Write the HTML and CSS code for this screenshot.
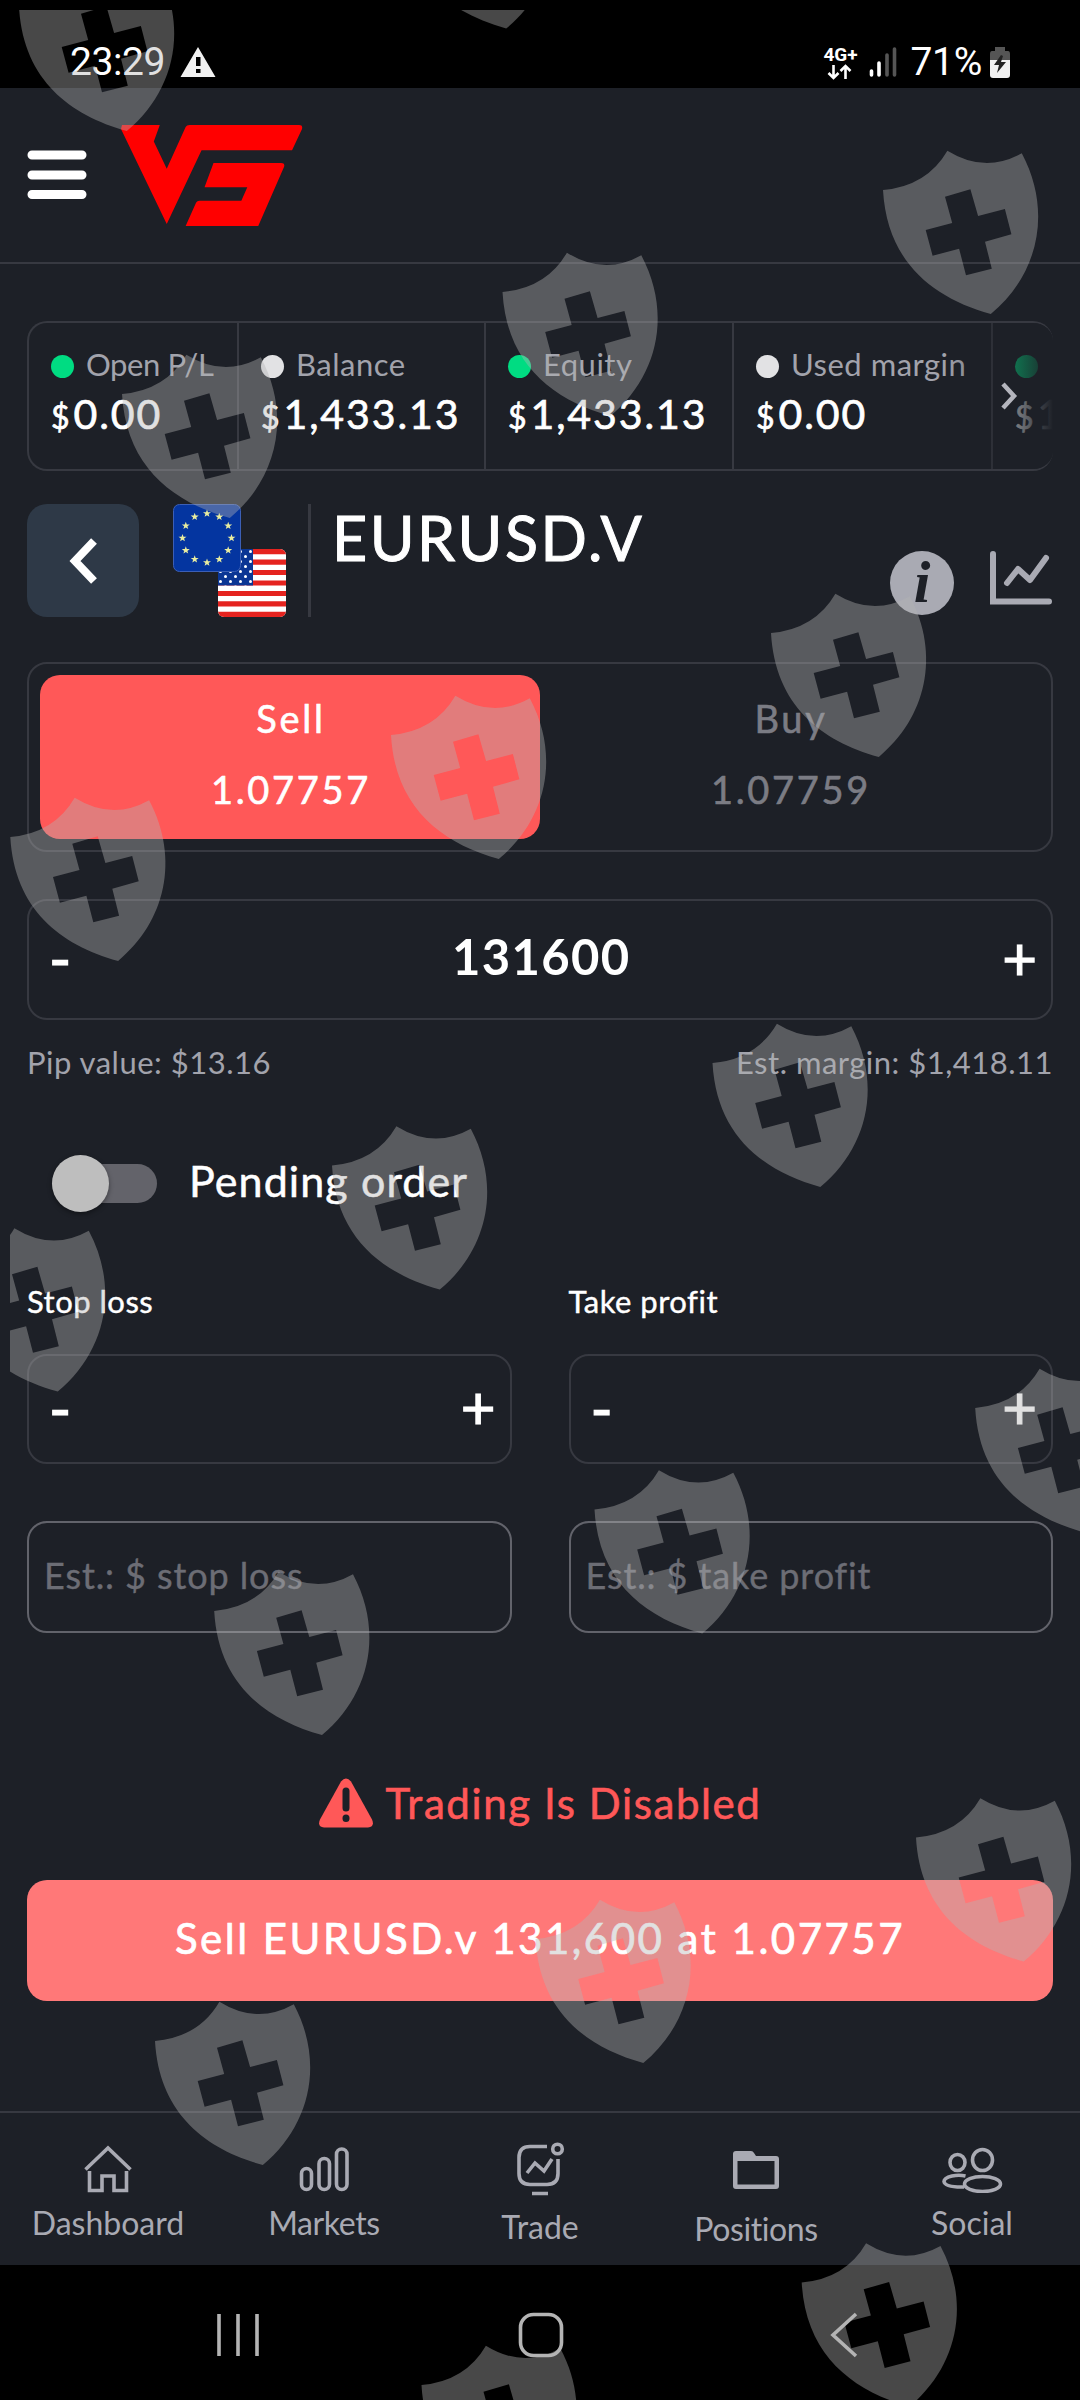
FILE: index.html
```
<!DOCTYPE html>
<html lang="en">
<head>
  <meta charset="UTF-8" />
  <meta name="viewport" content="width=device-width, initial-scale=1.0"/>
  <title>EURUSD.V</title>
  <link rel="stylesheet" href="styles.css">
</head>
<body>
<div class="phone">

  <div class="statusbar">
    <span class="clock">23:29</span>
    <svg class="alert" width="36" height="32" viewBox="0 0 36 32"><path fill="#f1f1f1" fill-rule="evenodd" d="M18 1L35.500 31H.5zM16 11v9h4.500v-9zM16 23v4h4.500v-4z"/></svg>
    <div class="network">
      <span>4G+</span>
      <svg width="26" height="16" viewBox="0 0 26 16" fill="none" stroke="#fff" stroke-width="2.600"><path d="M6.500 1v13M1.500 9l5 5 5-5M18.500 15V2M13.500 7l5-5 5 5"/></svg>
    </div>
    <svg class="signal" width="28" height="32" viewBox="0 0 28 32" stroke-width="3.600" stroke-linecap="round"><path stroke="#fff" d="M2.500 25v4M10 17v12"/><path stroke="#555" d="M18 9v20M25.500 3v26"/></svg>
    <span class="percent">71%</span>
    <svg class="battery" width="22" height="33" viewBox="0 0 22 33"><path fill="#555" d="M6 1h10v4h3q2 0 2 3v8H1V8q0-3 2-3h3z"/><path fill="#f1f1f1" d="M1 14h20v15q0 3-3 3H4q-3 0-3-3z"/><path fill="#222" d="M12 9L5 19h5l-2 8 9-11h-5l2-6z"/></svg>
  </div>

  <header class="header">
    <svg class="menu" width="60" height="50" viewBox="0 0 60 50" stroke="#fff" stroke-width="9" stroke-linecap="round"><path d="M5 5h50M5 25h50M5 44.500h50"/></svg>
    <svg class="logo" width="183" height="101" viewBox="0 0 184 104" preserveAspectRatio="none" fill="#f00"><path d="M2 0h38l-6 17 13 28L66 2q1-2 4-2h110q4 0 3 4l-10 22H82L47 102 1 4zM94 39h68q4 0 3 4l-26 61H66l10-23q1-3 4-3h42l6-14H85l8-22z"/></svg>
  </header>

  <main class="main">
    <section class="stats">
      <div class="stat stat-pl">
        <div class="stat-label"><i class="dot green"></i>Open P/L</div>
        <div class="stat-value"><small>$</small>0.00</div>
      </div>
      <div class="stat stat-balance">
        <div class="stat-label"><i class="dot"></i>Balance</div>
        <div class="stat-value"><small>$</small>1,433.13</div>
      </div>
      <div class="stat stat-equity">
        <div class="stat-label"><i class="dot green"></i>Equity</div>
        <div class="stat-value"><small>$</small>1,433.13</div>
      </div>
      <div class="stat stat-margin">
        <div class="stat-label"><i class="dot"></i>Used margin</div>
        <div class="stat-value"><small>$</small>0.00</div>
      </div>
      <div class="stat stat-last">
        <div class="stat-label"><i class="dot green"></i></div>
        <div class="stat-value"><small>$</small>1</div>
      </div>
      <div class="stats-fade">
        <svg width="20" height="30" viewBox="0 0 20 30" fill="none" stroke="#b4b5bd" stroke-width="4.500"><path d="M3 3l11 12L3 27"/></svg>
      </div>
    </section>

    <section class="symbol">
      <button class="back">
        <svg width="32" height="50" viewBox="0 0 32 50" fill="none" stroke="#fff" stroke-width="8"><path d="M27 5L8 25l19 20"/></svg>
      </button>
      <svg class="flags" width="113" height="113" viewBox="0 0 113 113">
        <defs>
          <clipPath id="us"><rect x="45" y="45" width="68" height="68" rx="6"/></clipPath>
          <pattern id="stars" width="10" height="10" patternUnits="userSpaceOnUse"><circle cx="2.500" cy="2.500" r="1.500" fill="#fff"/><circle cx="7.500" cy="7.500" r="1.500" fill="#fff"/></pattern>
          <path id="star" fill="#e9eda0" d="M0-4L1-1.300 4-1.200 1.600.6 2.400 3.300 0 1.700-2.400 3.300-1.600.6-4-1.200-1-1.300z"/>
        </defs>
        <g clip-path="url(#us)">
          <path fill="#fff" d="M45 45h68v68H45z"/>
          <path stroke="#e5231f" stroke-width="5.230" d="M45 47.600h68M45 58.100h68M45 68.500h68M45 79h68M45 89.500h68M45 99.900h68M45 110.400h68"/>
          <path fill="#0b3694" d="M45 45h35v36.600H45z"/>
          <path fill="url(#stars)" d="M45 45h35v36.600H45z"/>
        </g>
        <rect x=".5" y=".5" width="67" height="67" rx="6" fill="#0435a0" stroke="#3c5fb5"/>
        <use href="#star" x="34" y="9.500"/><use href="#star" x="46.300" y="12.800"/><use href="#star" x="55.200" y="21.700"/>
        <use href="#star" x="58.500" y="34"/><use href="#star" x="55.200" y="46.300"/><use href="#star" x="46.300" y="55.200"/>
        <use href="#star" x="34" y="58.500"/><use href="#star" x="21.700" y="55.200"/><use href="#star" x="12.800" y="46.300"/>
        <use href="#star" x="9.500" y="34"/><use href="#star" x="12.800" y="21.700"/><use href="#star" x="21.700" y="12.800"/>
      </svg>
      <h1>EURUSD.V</h1>
      <div class="symbol-icons">
        <div class="info">i</div>
        <svg width="62" height="54" viewBox="0 0 62 54" fill="none" stroke="#a9aab3" stroke-width="6" stroke-linecap="round" stroke-linejoin="round"><path stroke-linejoin="miter" d="M3 3v47.500h56"/><path d="M17 32l11-14 12 11L56 7"/></svg>
      </div>
    </section>

    <section class="sides">
      <button class="side active"><span>Sell</span><span>1.07757</span></button>
      <button class="side"><span>Buy</span><span>1.07759</span></button>
    </section>

    <div class="stepper amount"><span class="minus">-</span><b>131600</b><span class="plus">+</span></div>
    <div class="hints"><span>Pip value: $13.16</span><span>Est. margin: $1,418.11</span></div>

    <div class="pending"><span class="toggle"></span><span class="pending-text">Pending order</span></div>

    <div class="limits">
      <div class="limit">
        <label>Stop loss</label>
        <div class="stepper"><span class="minus">-</span><span class="plus">+</span></div>
        <div class="field">Est.: $ stop loss</div>
      </div>
      <div class="limit">
        <label>Take profit</label>
        <div class="stepper"><span class="minus">-</span><span class="plus">+</span></div>
        <div class="field">Est.: $ take profit</div>
      </div>
    </div>

    <div class="disabled">
      <svg width="54" height="50" viewBox="0 0 54 50"><path fill="#ff5858" d="M22 3.500q5-6 10 0l21 38q3 7-4 8H5q-7-1-4-8z"/><path fill="none" stroke="#1d2027" stroke-width="7" stroke-linecap="round" d="M27 13v17M27 40v.5"/></svg>
      <span>Trading Is Disabled</span>
    </div>
    <button class="submit">Sell EURUSD.v 131,600 at 1.07757</button>
  </main>

  <nav class="tabs">
    <a class="tab">
      <svg width="50" height="48" viewBox="0 0 50 48"><path d="M2.500 24.500L25 3l22.500 21.500M6.500 26v19.500H19V31h12v14.500h12.500V26"/></svg>
      <span>Dashboard</span>
    </a>
    <a class="tab tab-markets">
      <svg width="50" height="48" viewBox="0 0 50 48"><rect x="2.500" y="23.500" width="10" height="21" rx="5"/><rect x="20" y="13.500" width="10.500" height="31" rx="5.200"/><rect x="37.500" y="4" width="10.500" height="40.500" rx="5.200"/></svg>
      <span>Markets</span>
    </a>
    <a class="tab tab-trade">
      <svg width="50" height="54" viewBox="0 0 50 54"><path d="M32 4.500H15q-11 0-11 11v16q0 11 11 11h17q11 0 11-11V17M17 51.500h16M12 31l8-10 9 8 8-12"/><circle cx="42.500" cy="7" r="4.800"/></svg>
      <span>Trade</span>
    </a>
    <a class="tab tab-positions">
      <svg width="50" height="48" viewBox="0 0 50 48"><path class="solid" d="M2 9q0-3 3-3h15q2 0 3 2l2 3h20q3 0 3 3v27q0 3-3 3H5q-3 0-3-3zM6.500 16v23.500h37V16z"/></svg>
      <span>Positions</span>
    </a>
    <a class="tab">
      <svg width="62" height="48" viewBox="0 0 62 48"><ellipse cx="16.500" cy="17.500" rx="7.500" ry="8"/><ellipse cx="41.500" cy="15" rx="10" ry="10.500"/><ellipse cx="41.500" cy="39" rx="18" ry="7.500"/><path d="M24.500 31Q18 29.500 11 31 3 33 3 36.500 4 42.500 23 42"/></svg>
      <span>Social</span>
    </a>
  </nav>

  <div class="sysnav">
    <svg width="46" height="48" viewBox="0 0 46 48"><path d="M4 3v42M23 3v42M42 3v42"/></svg>
    <svg width="46" height="48" viewBox="0 0 46 48"><rect x="2.500" y="3.500" width="41" height="41" rx="13"/></svg>
    <svg width="46" height="48" viewBox="0 0 46 48"><path d="M36 3L13 24l23 21"/></svg>
  </div>

  <!-- shield watermark -->
  <svg class="watermark" width="1070" height="2390" viewBox="10 10 1070 2390">
    <defs>
      <path id="shield" fill-rule="evenodd" d="M0 40Q44 36 64.400.7 102 24 138.800 3.300C170 62 155 125 107.800 164 50 148 4 112 0 40zM62 46.700l7.200 26.300-26.500 7 6.900 25.700 26.500-7 6.900 26.600 25.800-6.600-6.800-27 26.400-7.400-6.500-25.300-26.800 7-7.700-26.700z"/>
    </defs>
    <use href="#shield" x="19" y="-33"/><use href="#shield" x="398.400" y="-135.500"/>
    <use href="#shield" x="883" y="150"/><use href="#shield" x="502.500" y="252"/><use href="#shield" x="122" y="354"/>
    <use href="#shield" x="771" y="593"/><use href="#shield" x="391" y="695"/><use href="#shield" x="10.300" y="797"/>
    <use href="#shield" x="712.500" y="1023"/><use href="#shield" x="332" y="1125.500"/><use href="#shield" x="-50" y="1227.500"/>
    <use href="#shield" x="975.200" y="1368"/><use href="#shield" x="594.500" y="1469.500"/><use href="#shield" x="214.200" y="1571"/>
    <use href="#shield" x="916" y="1797.500"/><use href="#shield" x="535.500" y="1899"/><use href="#shield" x="155" y="2001"/>
    <use href="#shield" x="801.700" y="2242.600"/><use href="#shield" x="421.500" y="2345"/>
  </svg>
</div>
</body>
</html>
```
FILE: styles.css
```
* {
  box-sizing: border-box;
}

body {
  margin: 0;
  background: #000;
  color: #fff;
  font-family: Lato, "Open Sans", sans-serif;
}

button {
  border: none;
  padding: 0;
  color: #fff;
  font-family: inherit;
}

svg {
  display: block;
  flex: none;
}

.phone {
  position: relative;
  width: 1080px;
  height: 2400px;
  display: flex;
  flex-direction: column;
  background: #1d2027;
  overflow: hidden;
}

.watermark {
  position: absolute;
  top: 10px;
  left: 10px;
  fill: rgba(180, 180, 180, 0.4);
  pointer-events: none;
}

/* status bar */
.statusbar {
  height: 88px;
  padding: 36px 69px 0 70px;
  display: flex;
  align-items: center;
  background: #000;
  font-family: Roboto, sans-serif;
  font-size: 39px;
  line-height: 50px;
}

.clock {
  width: 110px;
  letter-spacing: -0.4px;
}

.network {
  width: 34px;
  margin-left: auto;
  display: flex;
  flex-direction: column;
  align-items: center;
  font-size: 19px;
  font-weight: 700;
  line-height: 19px;
}

.signal {
  margin-left: 12px;
}

.percent {
  margin-left: 13px;
  letter-spacing: -0.3px;
}

.battery {
  margin-left: 7px;
}

/* header */
.header {
  height: 176px;
  padding: 36px 0 0 27px;
  display: flex;
  border-bottom: 2px solid #373941;
}

.menu {
  margin-top: 26px;
}

.logo {
  margin: 1px 0 0 33px;
}

.main {
  flex: 1;
  padding: 57px 27px 0;
}

/* account stats */
.stats {
  position: relative;
  height: 150px;
  display: flex;
  border: 2px solid #373941;
  border-right: none;
  border-radius: 20px;
  overflow: hidden;
}

.stat {
  flex: none;
  padding: 21px 0 0 22px;
  border-right: 2px solid #373941;
}

.stat-pl {
  width: 210px;
}

.stat-balance {
  width: 247px;
}

.stat-equity {
  width: 248px;
}

.stat-margin {
  width: 259px;
}

.stat-last {
  border: none;
}

.stat-label {
  height: 40px;
  display: flex;
  align-items: center;
  color: #a2a3ac;
  font-size: 31px;
  line-height: 40px;
  letter-spacing: 0.5px;
}

.stat-pl .stat-label {
  letter-spacing: -0.4px;
}

.dot {
  width: 23px;
  height: 23px;
  margin: 4px 12px 0 0;
  border-radius: 50%;
  background: #e2e2e4;
}

.dot.green {
  background: #00dc82;
}

.stat-value {
  margin-top: 5px;
  font-size: 41px;
  line-height: 50px;
  letter-spacing: 1.9px;
  -webkit-text-stroke: 0.7px #fff;
}

.stat-value small {
  margin-right: 2px;
  font-size: 32px;
}

.stats-fade {
  position: absolute;
  top: -2px;
  right: 0;
  width: 110px;
  height: 150px;
  padding: 60px 0 0 57px;
  background: linear-gradient(90deg, rgba(29, 32, 39, 0), rgba(29, 32, 39, 0.5) 60%, #1d2027);
}

/* symbol row */
.symbol {
  margin-top: 33px;
  height: 113px;
  display: flex;
}

.back {
  width: 112px;
  height: 113px;
  display: flex;
  align-items: center;
  justify-content: center;
  border-radius: 20px;
  background: #2e3947;
}

.flags {
  margin-left: 34px;
}

.symbol h1 {
  margin: 0 0 0 22px;
  padding-left: 21px;
  border-left: 3px solid #373941;
  font-size: 61px;
  font-weight: 400;
  line-height: 67px;
  letter-spacing: 2.5px;
  -webkit-text-stroke: 1px #fff;
}

.symbol-icons {
  margin: 47px 1px 0 auto;
  display: flex;
  gap: 36px;
}

.info {
  width: 64px;
  height: 64px;
  border-radius: 50%;
  background: #a9aab3;
  color: #1d2027;
  font: italic bold 60px/62px "Liberation Serif", serif;
  text-align: center;
}

/* sell / buy switch */
.sides {
  margin-top: 45px;
  height: 190px;
  padding: 11px;
  display: flex;
  border: 2px solid #373941;
  border-radius: 20px;
}

.side {
  width: 500px;
  height: 164px;
  display: flex;
  flex-direction: column;
  align-items: center;
  padding: 8px 0 0 2px;
  border-radius: 20px;
  background: none;
  color: #7b7c84;
  font-size: 38px;
  line-height: 71px;
  letter-spacing: 2.7px;
  -webkit-text-stroke: 0.6px;
}

.side.active {
  background: #ff5858;
  color: #fff;
}

/* inputs */
.stepper {
  height: 110px;
  padding: 0 14px 0 20px;
  display: flex;
  align-items: center;
  justify-content: space-between;
  border: 2px solid #373941;
  border-radius: 20px;
  font-size: 60px;
  -webkit-text-stroke: 1.2px #fff;
}

.stepper .minus {
  margin-top: -3px;
}

.stepper .plus {
  margin-top: -6px;
}

.amount {
  margin-top: 47px;
  height: 121px;
}

.amount b {
  margin: -8px 0 0 9px;
  font-size: 49px;
  letter-spacing: 1.3px;
  -webkit-text-stroke: 0;
}

.hints {
  margin-top: 22px;
  display: flex;
  justify-content: space-between;
  color: #a2a3ac;
  font-size: 31px;
  line-height: 40px;
  letter-spacing: 0.5px;
}

.pending {
  margin: 72px 0 0 25px;
  height: 58px;
  display: flex;
  align-items: center;
  font-size: 43px;
}

.pending-text {
  margin: -6px 0 0 32px;
  letter-spacing: 1.1px;
  -webkit-text-stroke: 0.5px #fff;
}

.toggle {
  position: relative;
  width: 105px;
  height: 39px;
  border-radius: 20px;
  background: #63636a;
}

.toggle::before {
  content: "";
  position: absolute;
  top: -9px;
  left: 0;
  width: 57px;
  height: 57px;
  border-radius: 50%;
  background: #bebebe;
  box-shadow: 0 2px 5px rgba(0, 0, 0, 0.4);
}

.limits {
  margin-top: 69px;
  display: grid;
  grid-template-columns: 1fr 1fr;
  gap: 57px;
}

.limit label {
  display: block;
  margin-bottom: 33px;
  font-size: 31px;
  line-height: 40px;
  letter-spacing: 0.5px;
  -webkit-text-stroke: 0.4px #fff;
}

.field {
  margin-top: 57px;
  height: 112px;
  padding-left: 15px;
  border: 2px solid #62636b;
  border-radius: 20px;
  color: #6c6d75;
  font-size: 36px;
  line-height: 105px;
  letter-spacing: 0.9px;
  -webkit-text-stroke: 0.4px;
}

/* warning and submit */
.disabled {
  margin-top: 145px;
  height: 50px;
  display: flex;
  justify-content: center;
  gap: 13px;
  color: #ff5858;
  font-size: 42px;
  line-height: 50px;
  letter-spacing: 1.6px;
  -webkit-text-stroke: 0.6px;
}

.submit {
  display: block;
  margin-top: 52px;
  width: 100%;
  height: 121px;
  padding-bottom: 5px;
  border-radius: 20px;
  background: #ff7878;
  font-size: 42px;
  letter-spacing: 2.5px;
  -webkit-text-stroke: 0.7px #fff;
}

/* bottom tabs */
.tabs {
  height: 154px;
  padding-top: 32px;
  display: grid;
  grid-template-columns: repeat(5, 1fr);
  border-top: 2px solid #373941;
}

.tab {
  display: flex;
  flex-direction: column;
  align-items: center;
  color: #a9aab3;
  font-size: 32px;
  line-height: 40px;
}

.tab svg {
  margin-bottom: 10px;
  fill: none;
  stroke: #a9aab3;
  stroke-width: 3.6px;
}

.tab .solid {
  fill: #a9aab3;
  fill-rule: evenodd;
  stroke: none;
}

.tab-markets span,
.tab-positions span {
  letter-spacing: -0.4px;
}

.tab-trade svg {
  margin: -3px 0 11px;
}

.tab-positions svg {
  margin-bottom: 16px;
}

/* android navigation */
.sysnav {
  height: 135px;
  padding: 4px 214px 0 215px;
  display: flex;
  align-items: center;
  justify-content: space-between;
  background: #000;
}

.sysnav svg {
  fill: none;
  stroke: #b4b4b4;
  stroke-width: 3.6px;
}
```
